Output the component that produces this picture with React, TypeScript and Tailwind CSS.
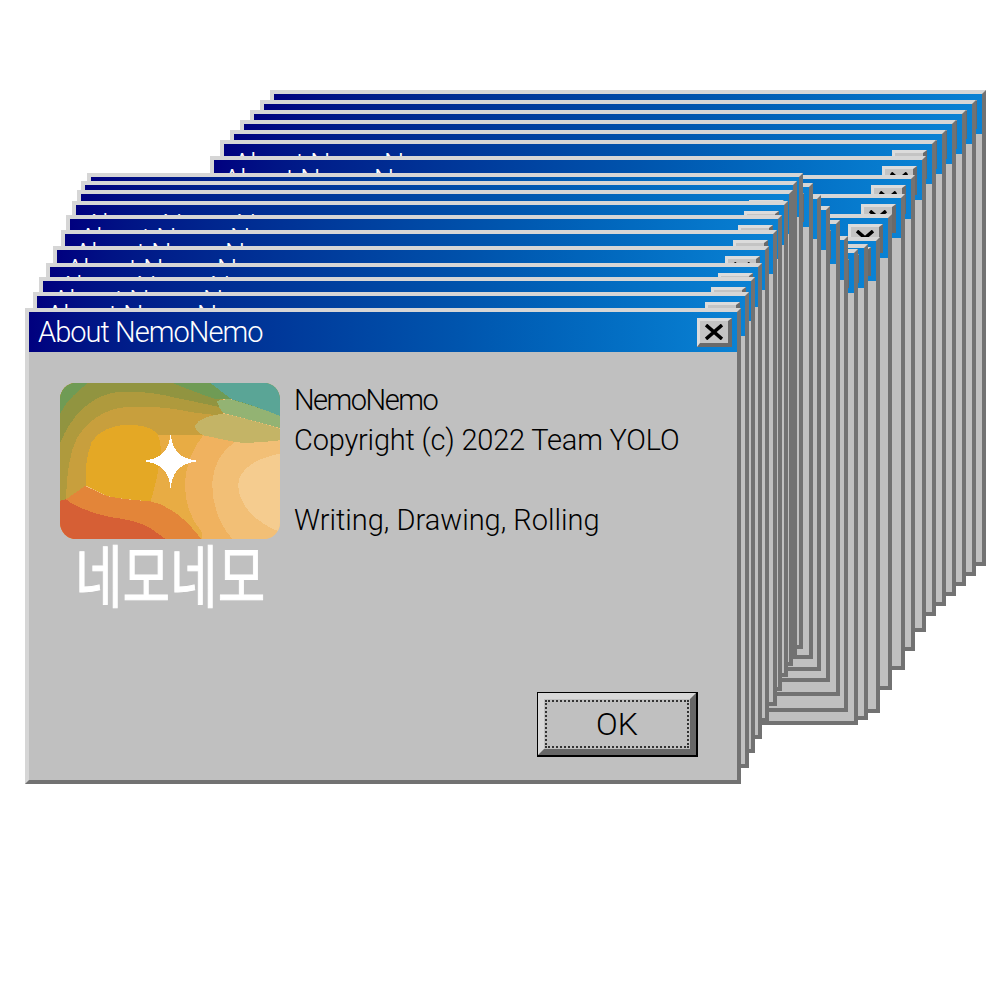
const windows: [number, number][] = [
  [986, 90], [976, 100], [966, 110], [956, 120], [946, 130], [936, 140], [926, 156], [915, 175], [905, 194], [892, 214],
  [880, 237], [868, 244], [858, 249], [848, 236], [840, 220], [830, 206], [821, 195], [813, 183],
  [803, 173], [797, 181], [793, 190], [788, 201], [782, 215], [777, 230], [769, 246], [762, 263], [755, 277], [749, 292], [741, 308],
];

function Logo() {
  return (
    <svg viewBox="30 22 660 470" className="w-[220px] h-[158px] block shrink-0" shapeRendering="crispEdges">
      <defs>
        <clipPath id="logo-clip">
          <rect x="30" y="22" width="660" height="470" rx="50" ry="50" />
        </clipPath>
      </defs>
      <g clipPath="url(#logo-clip)" shapeRendering="crispEdges">
        <rect x="30" y="22" width="660" height="470" fill="#F2BF76" />
        <path d="M690 235C640 245 585 265 568 310C555 350 585 405 620 430C645 450 670 462 690 470Z" fill="#F5CC8F" />
        <path d="M460 178L555 200C515 225 490 270 487 320C485 380 505 445 548 492L455 492L380 400L400 250Z" fill="#F0B25F" />
        <path d="M315 160L455 158L460 180C430 215 408 265 405 320C403 375 420 430 455 470L455 492L300 492L280 370Z" fill="#E8AC44" />
        <path d="M30 22H520V180H320C290 150 250 145 215 150C160 160 120 195 110 260L108 330L48 372L30 378Z" fill="#C89F3D" />
        <path d="M30 22H520V122L420 110C380 100 300 90 230 95C160 100 110 140 80 190C60 230 50 290 48 372L30 378Z" fill="#AF9A3D" />
        <path d="M30 22H510V95C470 88 420 75 380 68C320 52 250 45 190 52C120 65 60 125 30 205Z" fill="#919440" />
        <path d="M30 22H115C85 45 50 75 30 115Z" fill="#6F9B55" />
        <path d="M365 22H690V122L545 72H500C460 60 410 40 365 22Z" fill="#6F9B55" />
        <path d="M480 22H690V122L600 88L545 72Z" fill="#5AA596" />
        <path d="M500 78C510 72 535 70 550 74C600 88 650 105 690 122V158C640 145 570 125 520 113L510 100Z" fill="#93B373" />
        <path d="M435 150C445 130 480 120 520 115C570 125 640 145 690 160V195C640 200 590 205 555 200L460 180C445 172 435 165 435 150Z" fill="#C4B466" />
        <path d="M230 148C270 148 305 155 322 175C335 200 335 235 328 265C322 305 312 345 302 378C260 375 210 370 170 362L108 330C105 290 108 240 125 200C145 165 190 150 230 148Z" fill="#E4A825" />
        <path d="M48 372L105 332L170 362C215 372 260 375 302 378C340 385 385 415 415 445L455 492H30V380Z" fill="#E38539" />
        <path d="M30 376L48 372C75 395 130 415 180 425C230 432 270 440 300 458L348 492H30Z" fill="#D65F35" />
        <path d="M362 175C367 225 388 250 445 257C388 264 367 290 362 340C357 290 336 264 278 257C336 250 357 225 362 175Z" fill="#ffffff" />
      </g>
    </svg>
  );
}

function Window() {
  return (
    <div className="w-[716px] h-[476px] box-border border-4 border-t-[#d6d6d6] border-l-[#d6d6d6] border-r-[#727272] border-b-[#727272] bg-[#c0c0c0] flex flex-col">
      <div className="h-[40px] shrink-0 bg-gradient-to-r from-[#00007f] via-[#0054ad] via-60% to-[#0a82d4] flex items-center justify-between pl-[9px] pr-[5px]">
        <span className="text-white text-[29px] font-light leading-[40px] tracking-[-0.95px] whitespace-nowrap font-['Roboto',sans-serif]">About NemoNemo</span>
        <div className="w-[35px] h-[29px] box-border border-[3px] border-r-4 border-b-4 border-t-[#dcdcdc] border-l-[#dcdcdc] border-r-[#6a6a6a] border-b-[#6a6a6a] bg-[#c4c4c4] flex items-center justify-center">
          <svg viewBox="0 0 18 16" className="w-[18px] h-[16px]">
            <path d="M1 1L17 15M17 1L1 15" stroke="#000000" strokeWidth="3.5" fill="none" />
          </svg>
        </div>
      </div>
      <div className="flex-1 flex flex-col min-h-0">
        <div className="flex pt-[30px] pl-[31px] gap-[15px]">
          <div className="flex flex-col w-[220px]">
            <Logo />
            <div className="h-[70px] text-white text-[68px] leading-[70px] whitespace-nowrap origin-top-left scale-x-[0.76] [-webkit-text-stroke:1px_white] font-['Noto_Sans_CJK_KR',sans-serif] ml-[15px] mt-[-2px]">네모네모</div>
          </div>
          <div className="text-black text-[29px] font-light leading-[40px] mt-[-2px] ml-[-1px] whitespace-nowrap font-['Roboto',sans-serif]">
            <div className="tracking-[-1.5px]">NemoNemo</div>
            <div className="tracking-[-0.2px]">Copyright (c) 2022 Team YOLO</div>
            <div className="h-[40px]" />
            <div className="tracking-[0px]">Writing, Drawing, Rolling</div>
          </div>
        </div>
        <div className="mt-auto self-end mr-[39px] mb-[23px] w-[161px] h-[65px] box-border border border-r-2 border-b-2 border-black bg-[#c0c0c0]">
          <div className="w-full h-full box-border border-[6px] border-t-[#d8d8d8] border-l-[#d8d8d8] border-r-[#666666] border-b-[#666666] flex">
            <div className="flex-1 m-[1px] border-2 border-dotted border-[#333333] flex items-center justify-center">
              <span className="text-black text-[32px] font-light leading-none font-['Roboto',sans-serif]">OK</span>
            </div>
          </div>
        </div>
      </div>
    </div>
  );
}

export default function App() {
  return (
    <div className="relative w-[1000px] h-[1000px] bg-white overflow-hidden">
      {windows.map(([right, top], i) => (
        <div key={i} className="absolute" style={{ left: right - 716, top }}>
          <Window />
        </div>
      ))}
    </div>
  );
}
